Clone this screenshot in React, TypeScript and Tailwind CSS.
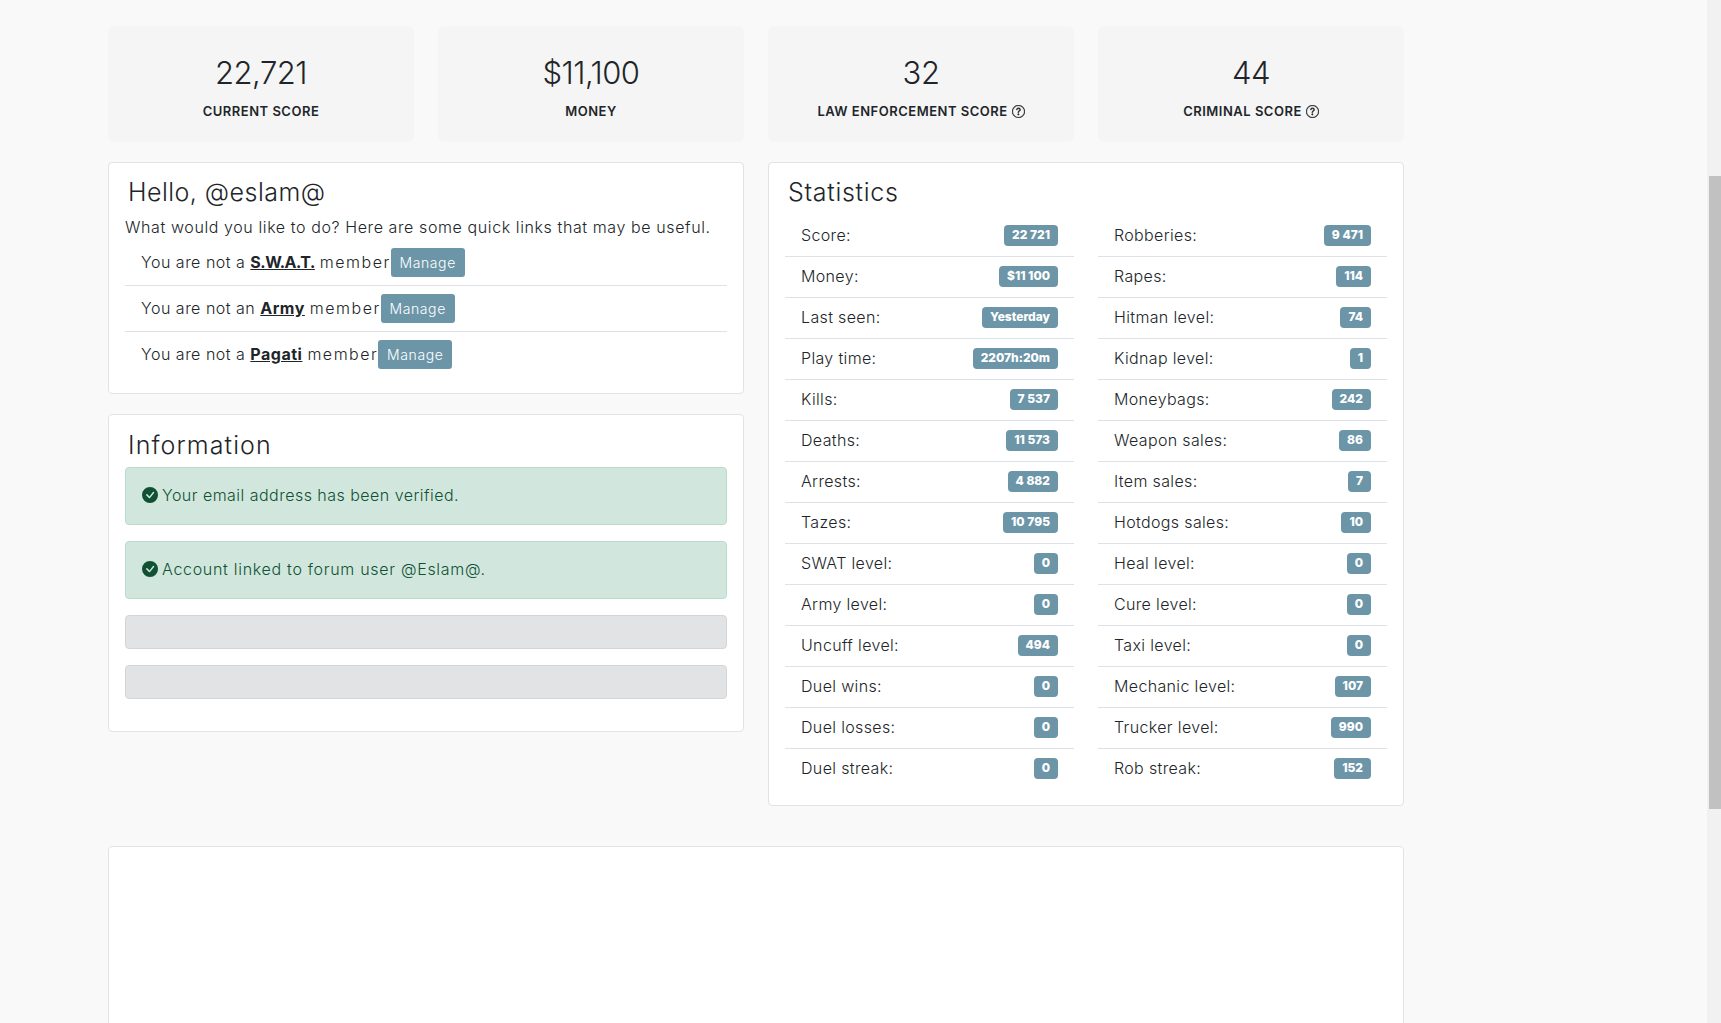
import { BsCheckCircleFill, BsQuestionCircle } from "react-icons/bs";

const scores = [
  { value: "22,721", label: "Current score" },
  { value: "$11,100", label: "Money" },
  { value: "32", label: "Law enforcement score", help: true },
  { value: "44", label: "Criminal score", help: true },
];

const links = [
  { before: "You are not a", name: "S.W.A.T.", nameClass: "tracking-[-0.5px]" },
  { before: "You are not an", name: "Army", nameClass: "tracking-[0.5px]" },
  { before: "You are not a", name: "Pagati", nameClass: "tracking-[0.5px]" },
];

const leftStats = [
  ["Score:", "22 721"],
  ["Money:", "$11 100"],
  ["Last seen:", "Yesterday"],
  ["Play time:", "2207h:20m"],
  ["Kills:", "7 537"],
  ["Deaths:", "11 573"],
  ["Arrests:", "4 882"],
  ["Tazes:", "10 795"],
  ["SWAT level:", "0"],
  ["Army level:", "0"],
  ["Uncuff level:", "494"],
  ["Duel wins:", "0"],
  ["Duel losses:", "0"],
  ["Duel streak:", "0"],
];

const rightStats = [
  ["Robberies:", "9 471"],
  ["Rapes:", "114"],
  ["Hitman level:", "74"],
  ["Kidnap level:", "1"],
  ["Moneybags:", "242"],
  ["Weapon sales:", "86"],
  ["Item sales:", "7"],
  ["Hotdogs sales:", "10"],
  ["Heal level:", "0"],
  ["Cure level:", "0"],
  ["Taxi level:", "0"],
  ["Mechanic level:", "107"],
  ["Trucker level:", "990"],
  ["Rob streak:", "152"],
];

function StatList({ rows }: { rows: string[][] }) {
  return (
    <ul>
      {rows.map(([label, value], i) => (
        <li
          key={label}
          className={`flex h-[41px] items-center justify-between border-b px-4 pb-[2px] ${i < rows.length - 1 ? "border-[#dee2e6]" : "border-transparent"}`}
        >
          <span className="tracking-[0.35px]">{label}</span>
          <span className="flex h-[21px] items-center rounded-[4px] bg-[#6c96a8] px-2 text-xs font-extrabold text-white">
            {value}
          </span>
        </li>
      ))}
    </ul>
  );
}

function Alert({ children, textClass }: { children: string; textClass: string }) {
  return (
    <div className="mb-4 flex h-[58px] items-center rounded-[4px] border border-[#badbcc] bg-[#d1e7dd] px-4 pb-[2px] text-[#0f5132]">
      <BsCheckCircleFill className="mr-[4px] h-4 w-4 shrink-0" />
      <span className={textClass}>{children}</span>
    </div>
  );
}

export default function App() {
  return (
    <div className="flex h-screen overflow-hidden bg-[#f9f9f9] font-['Inter','Liberation_Sans',sans-serif] text-base font-[350] text-[#212529]">
      <main className="min-w-0 flex-1 pl-[108px] pt-[26px]">
        <div className="w-[1296px]">
          <div className="grid grid-cols-4 gap-6">
            {scores.map((s) => (
              <div key={s.label} className="flex h-[116px] flex-col items-center rounded-[6px] bg-[#f5f5f5] pt-[28px]">
                <div className="text-[31px] leading-[38px] font-light tracking-[-0.5px]">{s.value}</div>
                <div className="mt-[9px] flex items-center gap-1 text-[13px] leading-5 font-semibold tracking-[0.5px] uppercase">
                  {s.label}
                  {s.help && <BsQuestionCircle className="h-[13px] w-[13px] stroke-[0.4]" />}
                </div>
              </div>
            ))}
          </div>

          <div className="mt-5 grid grid-cols-2 items-start gap-6">
            <div className="flex flex-col gap-5">
              <section className="rounded-[4px] border border-[#e3e3e3] bg-white px-4 pb-[15px] pt-[15px]">
                <h4 className="pl-[3px] text-[25px] leading-[29px] tracking-[0.47px]">Hello, @eslam@</h4>
                <p className="mt-2 leading-6 tracking-[0.6px]">What would you like to do? Here are some quick links that may be useful.</p>
                <ul className="mt-px">
                  {links.map((l, i) => (
                    <li
                      key={l.name}
                      className={`flex h-[46px] items-center border-b px-4 tracking-[0.5px] ${i < links.length - 1 ? "border-[#dee2e6]" : "border-transparent"}`}
                    >
                      <span className="pb-[2px]">
                        {l.before} <a className={`font-bold underline ${l.nameClass}`}>{l.name}</a>{" "}
                        <span className="tracking-[1.5px]">member</span>
                      </span>
                      <button className="flex h-[29px] w-[74px] items-center justify-center rounded-[3px] bg-[#6c96a8] text-sm tracking-[0.6px] text-white">
                        Manage
                      </button>
                    </li>
                  ))}
                </ul>
              </section>

              <section className="rounded-[4px] border border-[#e3e3e3] bg-white px-4 pb-4 pt-4">
                <h4 className="mb-[7px] pl-[3px] text-[25px] leading-[29px] tracking-[1.1px]">Information</h4>
                <Alert textClass="tracking-[0.47px]">Your email address has been verified.</Alert>
                <Alert textClass="tracking-[0.7px]">Account linked to forum user @Eslam@.</Alert>
                <div className="mb-4 h-[34px] rounded-[4px] border border-[#d3d6d8] bg-[#e2e3e5]" />
                <div className="mb-4 h-[34px] rounded-[4px] border border-[#d3d6d8] bg-[#e2e3e5]" />
              </section>
            </div>

            <section className="rounded-[4px] border border-[#e3e3e3] bg-white px-4 pb-[15px] pt-[15px]">
              <h4 className="mb-[9px] pl-[3px] text-[25px] leading-[29px] tracking-[0.7px]">Statistics</h4>
              <div className="grid grid-cols-2 gap-6">
                <StatList rows={leftStats} />
                <StatList rows={rightStats} />
              </div>
            </section>
          </div>

          <section className="mt-10 h-[300px] rounded-[4px] border border-[#e3e3e3] bg-white" />
        </div>
      </main>

      <aside className="flex w-[14px] shrink-0 flex-col bg-[#f1f1f1] pl-[2px] pt-[176px]">
        <div className="h-[633px] bg-[#c1c1c1]" />
      </aside>
    </div>
  );
}
